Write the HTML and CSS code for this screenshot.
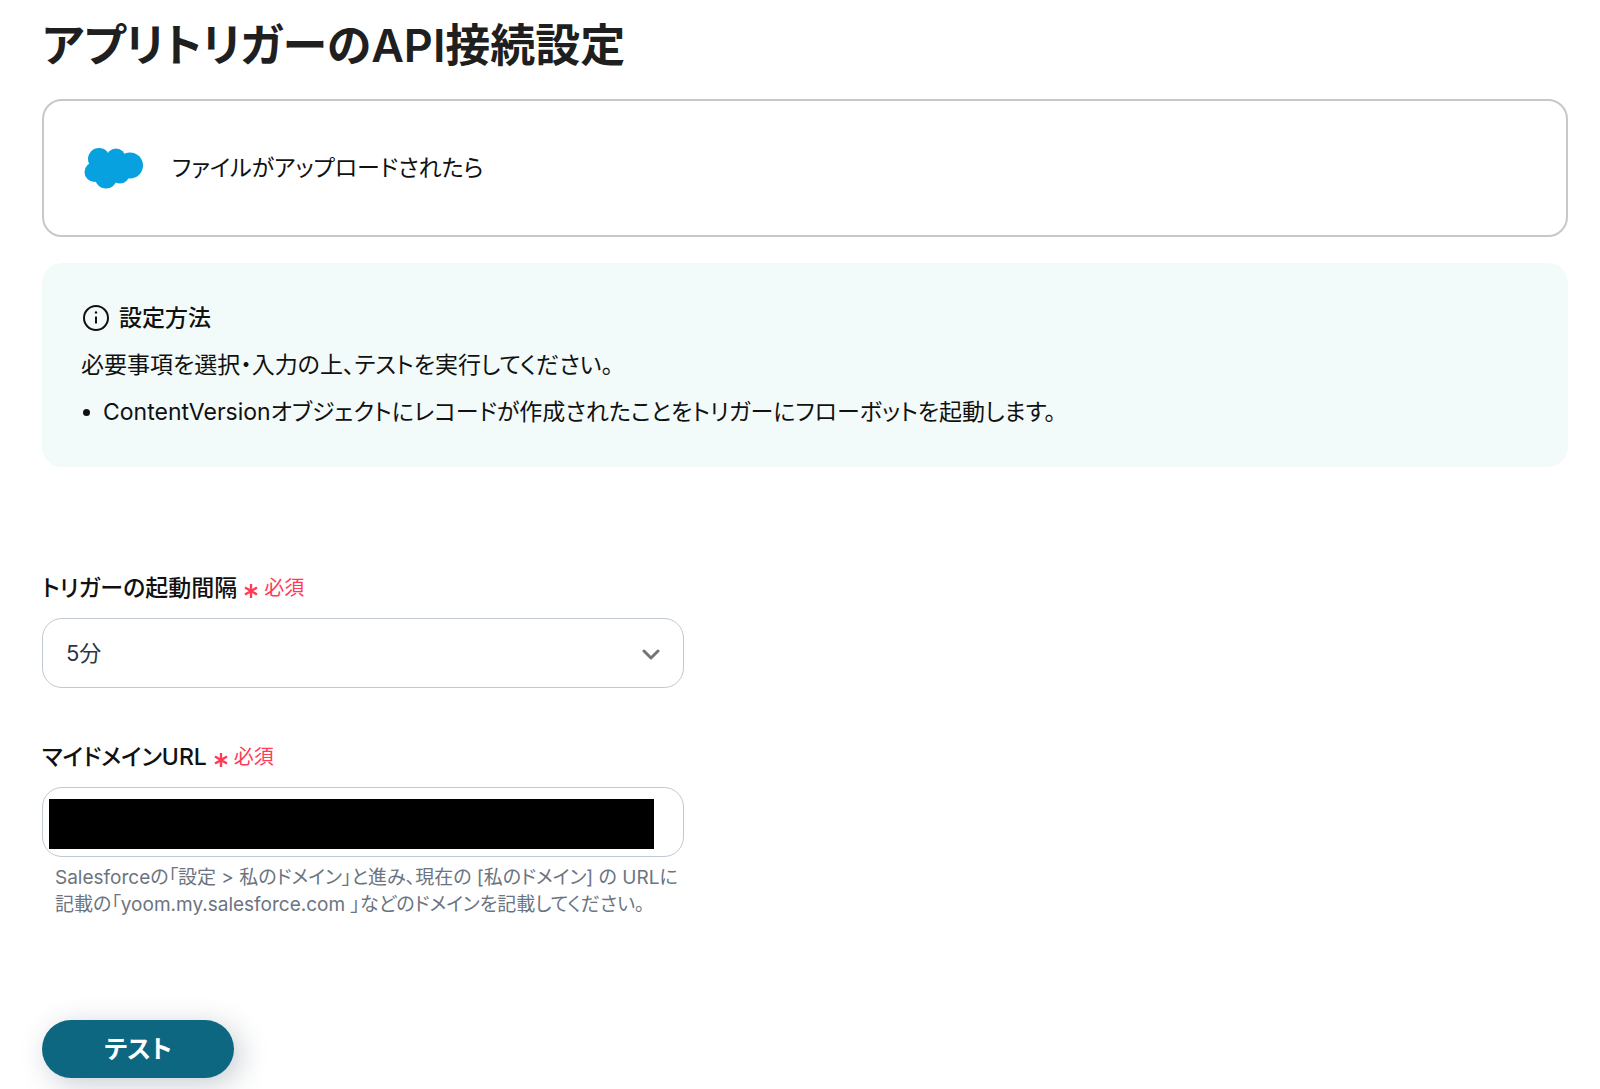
FILE: index.html
```html
<!DOCTYPE html>
<html lang="ja">
<head>
<meta charset="utf-8">
<meta name="viewport" content="width=device-width, initial-scale=1">
<title>アプリトリガーのAPI接続設定</title>
<link rel="stylesheet" href="styles.css">
</head>
<body>
<main class="page">
  <h1 class="title">アプリトリガーのAPI接続設定</h1>

  <section class="card">
    <svg class="logo" viewBox="0 0 60 42" aria-hidden="true">
      <g fill="#06a1de">
        <circle cx="15" cy="12" r="11"/>
        <circle cx="32" cy="11" r="9.500"/>
        <circle cx="46" cy="18.500" r="13"/>
        <circle cx="10.500" cy="25" r="10"/>
        <circle cx="22" cy="30.500" r="11"/>
        <circle cx="36" cy="27" r="9.500"/>
        <path d="M12 12H44V28H12Z"/>
      </g>
    </svg>
    <span class="card-text">ファイルがアップロードされたら</span>
  </section>

  <section class="info">
    <h2 class="info-title">
      <svg class="info-icon" viewBox="0 0 26 26" aria-hidden="true">
        <circle cx="13" cy="13" r="12" fill="none" stroke="#111" stroke-width="2"/>
        <circle cx="13" cy="7.500" r="1.200" fill="#111"/>
        <path d="M13 11.500V18.500" stroke="#111" stroke-width="2"/>
      </svg>
      設定方法
    </h2>
    <p class="info-text">必要事項を選択・入力の上、テストを実行してください。</p>
    <ul class="info-list">
      <li>ContentVersionオブジェクトにレコードが作成されたことをトリガーにフローボットを起動します。</li>
    </ul>
  </section>

  <form class="form">
    <div class="field">
      <label class="label" for="interval">トリガーの起動間隔
        <span class="required"><svg class="star" viewBox="0 0 14 14" aria-hidden="true"><path d="M7 0V14M1 3.500L13 10.500M13 3.500L1 10.500"/></svg>必須</span>
      </label>
      <div class="control">
        <select class="box" id="interval"><option>5分</option></select>
        <svg class="chevron" viewBox="0 0 18 12" aria-hidden="true"><path d="M2 2L9 9L16 2"/></svg>
      </div>
    </div>

    <div class="field">
      <label class="label" for="domain">マイドメインURL
        <span class="required"><svg class="star" viewBox="0 0 14 14" aria-hidden="true"><path d="M7 0V14M1 3.500L13 10.500M13 3.500L1 10.500"/></svg>必須</span>
      </label>
      <div class="control">
        <input class="box" id="domain" type="text" aria-describedby="domain-help">
        <span class="mask"></span>
      </div>
      <p class="help" id="domain-help">Salesforceの「設定 &gt; 私のドメイン」と進み、現在の [私のドメイン] の URLに<br>記載の「yoom.my.salesforce.com 」などのドメインを記載してください。</p>
    </div>

    <button class="submit" type="button">テスト</button>
  </form>
</main>
</body>
</html>
```
FILE: styles.css
```css
*, *::before, *::after {
  box-sizing: border-box;
}

body {
  margin: 0;
  min-height: 100vh;
  background: #fff;
  color: #111;
  font-family: Inter, "Noto Sans CJK JP", sans-serif;
  font-size: 23px;
  line-height: 32px;
  font-feature-settings: "palt";
}

h1, h2, p, ul {
  margin: 0;
}

.page {
  min-height: 100vh;
  padding: 12px 32px 0 42px;
}

.title {
  margin-bottom: 20px;
  color: #1f1f1f;
  font-size: 45px;
  line-height: 67px;
  font-weight: 600;
}

.card {
  display: flex;
  align-items: center;
  gap: 28px;
  min-height: 138px;
  padding: 32px 40px;
  border: 2px solid #c8c8c8;
  border-radius: 20px;
}

.logo {
  width: 60px;
  height: 42px;
}

.info {
  display: flex;
  flex-direction: column;
  gap: 15px;
  margin-top: 26px;
  padding: 39px;
  border-radius: 20px;
  background: #f2fbfa;
}

.info-title {
  display: flex;
  align-items: center;
  gap: 10px;
  padding-left: 2px;
  font-size: 23px;
  font-weight: 500;
}

.info-icon {
  width: 26px;
  height: 26px;
}

.info-list {
  padding: 0;
  list-style: none;
}

.info-list li {
  display: flex;
  align-items: center;
  gap: 13px;
  padding-left: 2px;
}

.info-list li::before {
  content: "";
  width: 7px;
  height: 7px;
  border-radius: 50%;
  background: #111;
}

.form {
  display: flex;
  flex-direction: column;
  align-items: flex-start;
  margin-top: 105px;
}

.field {
  width: 100%;
  max-width: 642px;
  margin-bottom: 53px;
}

.label {
  display: flex;
  align-items: center;
  gap: 7px;
  margin-bottom: 14px;
  font-weight: 500;
}

.required {
  display: flex;
  align-items: center;
  gap: 6px;
  color: #ff3b57;
  font-size: 20px;
  font-weight: 400;
}

.star {
  width: 14px;
  height: 14px;
  margin-top: 6px;
  fill: none;
  stroke: currentColor;
  stroke-width: 2.4;
}

.control {
  position: relative;
}

.box {
  display: block;
  width: 100%;
  height: 70px;
  padding: 0 23px;
  border: 1px solid #c0c9d2;
  border-radius: 20px;
  background: #fff;
  color: #2b3645;
  font: inherit;
  font-size: 22px;
  appearance: none;
}

.chevron {
  position: absolute;
  top: 31px;
  right: 24px;
  width: 18px;
  height: 12px;
  fill: none;
  stroke: #757575;
  stroke-width: 3;
  stroke-linecap: round;
  stroke-linejoin: round;
  pointer-events: none;
}

.mask {
  position: absolute;
  top: 12px;
  bottom: 8px;
  left: 7px;
  right: 30px;
  background: #000;
}

.help {
  padding: 7px 0 0 13px;
  color: #6b7480;
  font-size: 19px;
  line-height: 27px;
  white-space: nowrap;
}

.submit {
  width: 192px;
  height: 58px;
  margin-top: 49px;
  border: 0;
  border-radius: 29px;
  background: #0d6780;
  box-shadow: 6px 6px 28px rgba(30, 50, 80, 0.25);
  color: #fff;
  font: inherit;
  font-size: 25px;
  font-weight: 600;
}
```
